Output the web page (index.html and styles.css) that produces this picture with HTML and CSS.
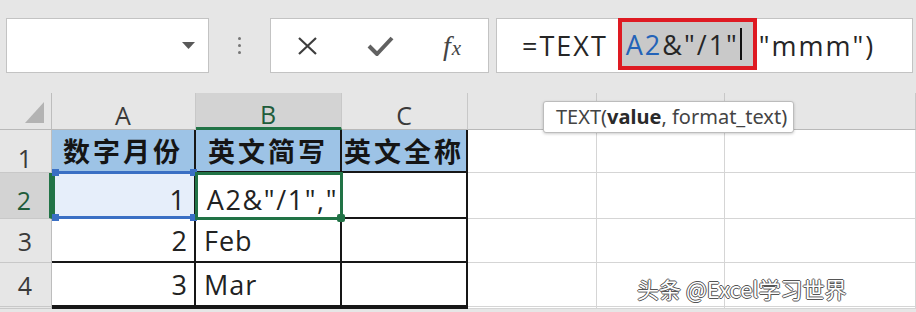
FILE: index.html
```html
<!DOCTYPE html>
<html lang="zh-CN">

<head>
    <meta charset="UTF-8">
    <meta name="viewport" content="width=device-width, initial-scale=1.0">
    <title>TEXT 函数</title>
    <link rel="stylesheet" href="styles.css">
</head>

<body>
    <div class="toolbar">
        <div class="name-box">
            <svg class="dropdown" width="13" height="7" viewBox="0 0 13 7"><polygon points="0,0 13,0 6.5,7" fill="#595959"/></svg>
        </div>
        <div class="dots"><i></i><i></i><i></i></div>
        <div class="fx-buttons">
            <svg class="btn-cancel" width="21" height="18" viewBox="0 0 21 18"><path d="M2 1 L19 17 M19 1 L2 17" stroke="#3d3d3d" stroke-width="2.2" fill="none"/></svg>
            <svg class="btn-enter" width="27" height="22" viewBox="0 0 27 22"><path d="M2 11 L10 19 L25 3" stroke="#616161" stroke-width="4" fill="none" stroke-linejoin="round"/></svg>
            <span class="btn-fx">f<span>x</span></span>
        </div>
        <div class="formula-input">
            <span>=TEXT</span>
            <span class="ref-box"><span class="ref">A2</span>&amp;"/1"<i class="caret"></i></span>
            <span class="rest">"mmm")</span>
        </div>
    </div>

    <div class="sheet">
        <div class="hd corner"></div>
        <div class="hd col">A</div>
        <div class="hd col sel-col">B</div>
        <div class="hd col">C</div>
        <div class="hd col"></div>
        <div class="hd col"></div>
        <div class="hd col"></div>

        <div class="hd row r1">1</div>
        <div class="cell t title above-ref">数字月份</div>
        <div class="cell t title">英文简写</div>
        <div class="cell t title">英文全称</div>
        <div class="cell"></div>
        <div class="cell"></div>
        <div class="cell"></div>

        <div class="hd row r2 sel-row">2</div>
        <div class="cell t num r2 ref-cell">1
            <i class="handle tl"></i><i class="handle tr"></i><i class="handle bl"></i><i class="handle br"></i>
        </div>
        <div class="cell t r2 active">
            <div class="edit">A2&amp;"/1","</div>
            <i class="fill-handle"></i>
        </div>
        <div class="cell t"></div>
        <div class="cell"></div>
        <div class="cell"></div>
        <div class="cell"></div>

        <div class="hd row">3</div>
        <div class="cell t num">2</div>
        <div class="cell t txt">Feb</div>
        <div class="cell t"></div>
        <div class="cell"></div>
        <div class="cell"></div>
        <div class="cell"></div>

        <div class="hd row">4</div>
        <div class="cell t num">3</div>
        <div class="cell t txt">Mar</div>
        <div class="cell t"></div>
        <div class="cell"></div>
        <div class="cell"></div>
        <div class="cell"></div>

        <div class="hd row"></div>
        <div class="cell t"></div>
        <div class="cell t"></div>
        <div class="cell t"></div>
        <div class="cell"></div>
        <div class="cell"></div>
        <div class="cell"></div>

        <div class="tooltip">TEXT(<b>value</b>, format_text)</div>
        <div class="watermark">头条 @Excel学习世界</div>
    </div>
</body>

</html>
```

FILE: styles.css
```css
body {
    margin: 0;
    width: 916px;
    height: 312px;
    overflow: hidden;
    background-color: #e6e6e6;
    font-family: 'Open Sans', 'Noto Sans CJK SC', sans-serif;
    color: #222;
}

/* formula bar */
.toolbar {
    display: flex;
    height: 93px;
    padding-top: 18px;
    box-sizing: border-box;
}

.name-box {
    margin-left: 6px;
    width: 203px;
    height: 55px;
    box-sizing: border-box;
    background-color: #fff;
    border: 1px solid #c3c3c3;
    display: flex;
    align-items: center;
    justify-content: flex-end;
    padding-right: 13px;
}

.dots {
    width: 61px;
    height: 55px;
    display: flex;
    flex-direction: column;
    align-items: center;
    justify-content: center;
    gap: 4px;
}

.dots i {
    width: 3px;
    height: 3px;
    border-radius: 50%;
    background-color: #767676;
}

.fx-buttons {
    width: 219px;
    height: 55px;
    box-sizing: border-box;
    background-color: #fff;
    border: 1px solid #c3c3c3;
    display: flex;
    align-items: center;
}

.btn-cancel {
    margin-left: 26px;
}

.btn-enter {
    margin-left: 49px;
}

.btn-fx {
    margin-left: 49px;
    font-family: 'Liberation Serif', serif;
    font-style: italic;
    font-size: 28px;
    color: #444;
    line-height: 1;
}

.btn-fx span {
    font-size: 21px;
    margin-left: 1px;
}

.formula-input {
    margin-left: 7px;
    width: 417px;
    height: 55px;
    box-sizing: border-box;
    background-color: #fff;
    border: 1px solid #c3c3c3;
    display: flex;
    align-items: center;
    padding-left: 25px;
    font-size: 27px;
    letter-spacing: 2px;
    color: #262626;
    white-space: nowrap;
}

.ref-box {
    margin-left: 10px;
    margin-bottom: 3px;
    width: 139px;
    height: 52px;
    box-sizing: border-box;
    border: 4px solid #de1a22;
    background-color: #c9c9c9;
    padding-left: 4px;
    display: flex;
    align-items: center;
}

.ref {
    color: #2463b8;
}

.caret {
    margin-left: 1px;
    width: 2px;
    height: 32px;
    background-color: #111;
}

.rest {
    margin-left: 2px;
}

/* sheet */
.sheet {
    position: relative;
    display: grid;
    grid-template-columns: 52px 144px 146px 126px 129px 128px 1fr;
    grid-template-rows: 37px 43px 46px 44px 44px 1fr;
    font-size: 27px;
    letter-spacing: 1px;
}

.hd {
    box-sizing: border-box;
    background-color: #e6e6e6;
    color: #3a3a3a;
    font-size: 25px;
    display: flex;
    align-items: center;
    justify-content: center;
}

.col {
    border-right: 1px solid #c8c8c8;
    border-bottom: 1px solid #b9b9b9;
    padding-top: 8px;
}

.row {
    border-right: 1px solid #bdbdbd;
    border-bottom: 1px solid #c8c8c8;
}

.corner {
    position: relative;
    border-right: 1px solid #bdbdbd;
    border-bottom: 1px solid #b9b9b9;
}

.corner::after {
    content: '';
    position: absolute;
    right: 7px;
    bottom: 6px;
    width: 19px;
    height: 21px;
    background-color: #b3b3b3;
    clip-path: polygon(100% 0, 100% 100%, 0 100%);
}

.sel-col {
    background-color: #d3d3d3;
    color: #1f5c3a;
    border-bottom: 3px solid #217346;
}

.sel-row {
    background-color: #d3d3d3;
    color: #1f5c3a;
    border-right: 3px solid #217346;
}

.r1 {
    padding-top: 14px;
}

.r2 {
    padding-top: 9px;
}

.cell {
    box-sizing: border-box;
    background-color: #fff;
    border-right: 1px solid #d5d5d5;
    border-bottom: 1px solid #d5d5d5;
    display: flex;
    align-items: center;
    white-space: nowrap;
}

.cell.t {
    border-right: 2px solid #171717;
    border-bottom: 2px solid #171717;
}

.title {
    background-color: #9dc3e6;
    justify-content: center;
    font-family: 'Noto Sans CJK SC', sans-serif;
    font-weight: 700;
    font-size: 27px;
    letter-spacing: 3px;
    color: #151515;
}

.above-ref {
    border-bottom-color: #3a6fc4 !important;
}

.num {
    justify-content: flex-end;
    padding-right: 6px;
}

.txt {
    padding-left: 8px;
}

.ref-cell {
    position: relative;
    z-index: 2;
    background-color: #e6eefa;
    border-bottom: 3px solid #3a6fc4 !important;
    box-shadow: inset 0 1px 0 #3a6fc4, inset 3px 0 0 #217346;
    padding-right: 8px;
}

.handle {
    position: absolute;
    width: 7px;
    height: 7px;
    background-color: #3a6fc4;
}

.handle.tl { left: 0; top: -4px; }
.handle.tr { right: -3px; top: -4px; }
.handle.bl { left: 0; bottom: -5px; }
.handle.br { right: -3px; bottom: -5px; }

.active {
    position: relative;
    z-index: 3;
    outline: 3px solid #217346;
    outline-offset: -2px;
    padding-top: 9px;
    padding-left: 3px;
    padding-right: 2px;
}

.edit {
    flex: 1;
    overflow: hidden;
    letter-spacing: 1.6px;
    text-align: right;
}

.fill-handle {
    position: absolute;
    right: -5px;
    bottom: -5px;
    width: 8px;
    height: 8px;
    background-color: #217346;
    border-radius: 2px;
}

.tooltip {
    position: absolute;
    left: 543px;
    top: 8px;
    width: 251px;
    height: 32px;
    box-sizing: border-box;
    background-color: #fff;
    border: 1px solid #bcbcbc;
    border-radius: 3px;
    box-shadow: 0 1px 3px rgba(0, 0, 0, 0.2);
    padding-left: 12px;
    font-family: 'Noto Sans', sans-serif;
    font-size: 20px;
    letter-spacing: 0;
    line-height: 29px;
    white-space: nowrap;
    color: #444;
    z-index: 4;
}

.tooltip b {
    color: #2a2a2a;
}

.watermark {
    position: absolute;
    left: 637px;
    top: 179px;
    font-family: 'Noto Sans CJK SC', sans-serif;
    font-size: 22px;
    letter-spacing: 0;
    color: #fff;
    text-shadow: -1px 0 #555, 1px 0 #555, 0 -1px #555, 0 1px #555;
    z-index: 4;
}
```
